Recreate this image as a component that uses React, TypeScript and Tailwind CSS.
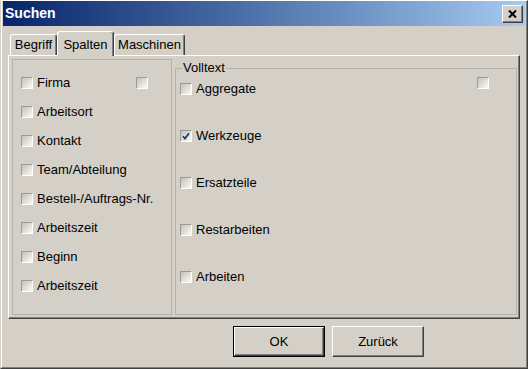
import React from "react";

const Check = ({ checked = false }: { checked?: boolean }) => (
  <span className="flex h-[12px] w-[12px] shrink-0 items-center justify-center border border-t-[#9c9a94] border-l-[#9c9a94] border-r-white border-b-white bg-gradient-to-br from-[#c4c1ba] to-[#fafaf8]">
    {checked && (
      <svg width="8" height="8" viewBox="0 0 8 8">
        <path d="M1 4.2 L3 6.6 L7 1.2" stroke="#22347a" strokeWidth="1.7" fill="none" />
      </svg>
    )}
  </span>
);

const leftItems = [
  "Firma",
  "Arbeitsort",
  "Kontakt",
  "Team/Abteilung",
  "Bestell-/Auftrags-Nr.",
  "Arbeitszeit",
  "Beginn",
  "Arbeitszeit",
];

const rightItems = [
  { label: "Aggregate", checked: false },
  { label: "Werkzeuge", checked: true },
  { label: "Ersatzteile", checked: false },
  { label: "Restarbeiten", checked: false },
  { label: "Arbeiten", checked: false },
];

const App = () => {
  return (
    <div className="flex h-[369px] w-[528px] flex-col border border-t-white border-l-[#d4d0c8] border-r-[#404040] border-b-[#404040] bg-[#d4d0c8] font-['Liberation_Sans',Arial,sans-serif] text-[13px] text-black">
      <div className="flex flex-1 flex-col border-l border-r border-b border-l-white border-r-[#808080] border-b-[#808080] px-px pb-px">
        {/* title bar */}
        <div className="flex h-[25px] items-center justify-between bg-gradient-to-r from-[#0a246a] to-[#a6caf0] pl-[2px] pr-[2px]">
          <span className="text-[14px] font-bold text-white">Suchen</span>
          <div className="flex h-[18px] w-[21px] items-center justify-center border border-t-white border-l-white border-r-[#404040] border-b-[#404040] bg-[#d4d0c8] shadow-[inset_-1px_-1px_#808080]">
            <svg width="9" height="8" viewBox="0 0 9 8">
              <path d="M1 0.5 L8 7.5 M8 0.5 L1 7.5" stroke="#000" strokeWidth="2" />
            </svg>
          </div>
        </div>

        <div className="px-[5px]">
          {/* tabs */}
          <div className="mt-[5px] flex h-[24px] items-end pl-[2px]">
            <div className="flex h-[21px] w-[47px] items-center justify-center rounded-t-[3px] border-t border-l border-r border-t-white border-l-white border-r-[#404040] shadow-[inset_-1px_0_#808080]">
              Begriff
            </div>
            <div className="relative z-10 -mb-px flex h-[25px] w-[57px] items-start justify-center rounded-t-[3px] border-t border-l border-r border-t-white border-l-white border-r-[#404040] bg-[#d4d0c8] pt-[3px] shadow-[inset_-1px_0_#808080]">
              Spalten
            </div>
            <div className="flex h-[21px] w-[71px] items-center justify-center rounded-t-[3px] border-t border-l border-r border-t-white border-l-white border-r-[#404040] shadow-[inset_-1px_0_#808080]">
              Maschinen
            </div>
          </div>

          {/* panel */}
          <div className="flex h-[264px] gap-[3px] border border-t-white border-l-white border-r-[#404040] border-b-[#404040] pt-[3px] pl-[3px] pr-[2px] shadow-[inset_-1px_-1px_#808080]">
            <div className="flex h-[256px] w-[160px] flex-col border border-[#b6b2aa] pt-[8px] pl-[8px]">
              {leftItems.map((item, i) => (
                <div key={i} className="flex h-[29px] items-center gap-[4px]">
                  <Check />
                  <span>{item}</span>
                  {i === 0 && (
                    <span className="ml-auto mr-[23px]">
                      <Check />
                    </span>
                  )}
                </div>
              ))}
            </div>

            <fieldset className="flex h-[256px] flex-1 flex-col border border-[#b6b2aa] pl-[4px]">
              <legend className="ml-[2px] px-px leading-[18px]">Volltext</legend>
              <div className="flex flex-col gap-[23px]">
                {rightItems.map((item, i) => (
                  <div key={i} className="flex items-start">
                    <div className="flex h-[24px] items-center gap-[4px]">
                      <Check checked={item.checked} />
                      <span>{item.label}</span>
                    </div>
                    {i === 0 && (
                      <span className="ml-auto mr-[27px]">
                        <Check />
                      </span>
                    )}
                  </div>
                ))}
              </div>
            </fieldset>
          </div>
        </div>

        {/* buttons */}
        <div className="mt-[7px] flex gap-[7px] pl-[230px]">
          <div className="h-[31px] w-[92px] border border-black">
            <div className="flex h-full w-full items-center justify-center border border-t-white border-l-white border-r-[#404040] border-b-[#404040] shadow-[inset_-1px_-1px_#808080]">
              OK
            </div>
          </div>
          <div className="flex h-[31px] w-[92px] items-center justify-center border border-t-white border-l-white border-r-[#404040] border-b-[#404040] shadow-[inset_-1px_-1px_#808080]">
            Zurück
          </div>
        </div>
      </div>
    </div>
  );
};

export default App;
